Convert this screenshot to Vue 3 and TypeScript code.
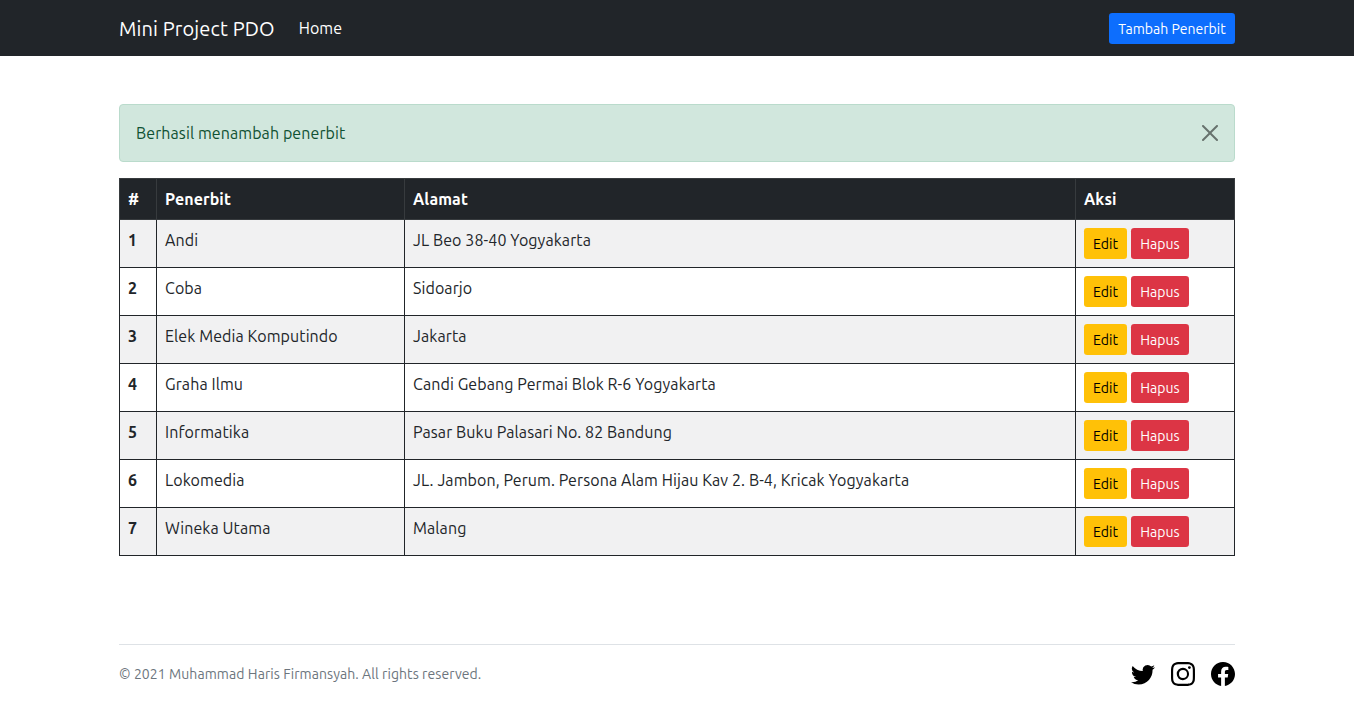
<script setup lang="ts">
import { ref } from 'vue'

interface Publisher {
  id: number
  name: string
  address: string
}

const showAlert = ref(true)

const publishers: Publisher[] = [
  { id: 1, name: 'Andi', address: 'JL Beo 38-40 Yogyakarta' },
  { id: 2, name: 'Coba', address: 'Sidoarjo' },
  { id: 3, name: 'Elek Media Komputindo', address: 'Jakarta' },
  { id: 4, name: 'Graha Ilmu', address: 'Candi Gebang Permai Blok R-6 Yogyakarta' },
  { id: 5, name: 'Informatika', address: 'Pasar Buku Palasari No. 82 Bandung' },
  { id: 6, name: 'Lokomedia', address: 'JL. Jambon, Perum. Persona Alam Hijau Kav 2. B-4, Kricak Yogyakarta' },
  { id: 7, name: 'Wineka Utama', address: 'Malang' },
]
</script>

<template>
  <div class="page">
    <nav class="navbar">
      <div class="container nav-inner">
        <a class="brand">Mini Project PDO</a>
        <a class="nav-link">Home</a>
        <a class="btn primary">Tambah Penerbit</a>
      </div>
    </nav>

    <main class="container main">
      <div v-if="showAlert" class="alert">
        <span>Berhasil menambah penerbit</span>
        <button class="close" aria-label="Close" @click="showAlert = false">
          <svg viewBox="0 0 16 16" width="16" height="16">
            <path d="M.293.293a1 1 0 011.414 0L8 6.586 14.293.293a1 1 0 111.414 1.414L9.414 8l6.293 6.293a1 1 0 01-1.414 1.414L8 9.414l-6.293 6.293a1 1 0 01-1.414-1.414L6.586 8 .293 1.707a1 1 0 010-1.414z" />
          </svg>
        </button>
      </div>

      <table class="table">
        <colgroup>
          <col class="c-id" />
          <col class="c-name" />
          <col class="c-address" />
          <col class="c-action" />
        </colgroup>
        <thead>
          <tr>
            <th>#</th>
            <th>Penerbit</th>
            <th>Alamat</th>
            <th>Aksi</th>
          </tr>
        </thead>
        <tbody>
          <tr v-for="p in publishers" :key="p.id">
            <th>{{ p.id }}</th>
            <td>{{ p.name }}</td>
            <td>{{ p.address }}</td>
            <td>
              <div class="actions">
                <a class="btn warning">Edit</a>
                <a class="btn danger">Hapus</a>
              </div>
            </td>
          </tr>
        </tbody>
      </table>
    </main>

    <footer class="container footer">
      <span class="copy">© 2021 Muhammad Haris Firmansyah. All rights reserved.</span>
      <div class="social">
        <svg viewBox="0 0 16 16" width="24" height="24">
          <path d="M5.026 15c6.038 0 9.341-5.003 9.341-9.334 0-.14 0-.282-.006-.422A6.685 6.685 0 0 0 16 3.542a6.658 6.658 0 0 1-1.889.518 3.301 3.301 0 0 0 1.447-1.817 6.533 6.533 0 0 1-2.087.793A3.286 3.286 0 0 0 7.875 6.03a9.325 9.325 0 0 1-6.767-3.429 3.289 3.289 0 0 0 1.018 4.382A3.323 3.323 0 0 1 .64 6.575v.045a3.288 3.288 0 0 0 2.632 3.218 3.203 3.203 0 0 1-.865.115 3.23 3.23 0 0 1-.614-.057 3.283 3.283 0 0 0 3.067 2.277A6.588 6.588 0 0 1 .78 13.58a6.32 6.32 0 0 1-.78-.045A9.344 9.344 0 0 0 5.026 15z" />
        </svg>
        <svg viewBox="0 0 16 16" width="24" height="24">
          <path d="M8 0C5.829 0 5.556.01 4.703.048 3.85.088 3.269.222 2.76.42a3.917 3.917 0 0 0-1.417.923A3.927 3.927 0 0 0 .42 2.76C.222 3.268.087 3.85.048 4.7.01 5.555 0 5.827 0 8.001c0 2.172.01 2.444.048 3.297.04.852.174 1.433.372 1.942.205.526.478.972.923 1.417.444.445.89.719 1.416.923.51.198 1.09.333 1.942.372C5.555 15.99 5.827 16 8 16s2.444-.01 3.298-.048c.851-.04 1.434-.174 1.943-.372a3.916 3.916 0 0 0 1.416-.923c.445-.445.718-.891.923-1.417.197-.509.332-1.09.372-1.942C15.99 10.445 16 10.173 16 8s-.01-2.445-.048-3.299c-.04-.851-.175-1.433-.372-1.941a3.926 3.926 0 0 0-.923-1.417A3.911 3.911 0 0 0 13.24.42c-.51-.198-1.092-.333-1.943-.372C10.443.01 10.172 0 7.998 0h.003zm-.717 1.442h.718c2.136 0 2.389.007 3.232.046.78.035 1.204.166 1.486.275.373.145.64.319.92.599.28.28.453.546.598.92.11.281.24.705.275 1.485.039.843.047 1.096.047 3.231s-.008 2.389-.047 3.232c-.035.78-.166 1.203-.275 1.485a2.47 2.47 0 0 1-.599.919c-.28.28-.546.453-.92.598-.28.11-.704.24-1.485.276-.843.038-1.096.047-3.232.047s-2.39-.009-3.233-.047c-.78-.036-1.203-.166-1.485-.276a2.478 2.478 0 0 1-.92-.598 2.48 2.48 0 0 1-.6-.92c-.109-.281-.24-.705-.275-1.485-.038-.843-.046-1.096-.046-3.233 0-2.136.008-2.388.046-3.231.036-.78.166-1.204.276-1.486.145-.373.319-.64.599-.92.28-.28.546-.453.92-.598.282-.11.705-.24 1.485-.276.738-.034 1.024-.044 2.515-.045v.002zm4.988 1.328a.96.96 0 1 0 0 1.92.96.96 0 0 0 0-1.92zm-4.27 1.122a4.109 4.109 0 1 0 0 8.217 4.109 4.109 0 0 0 0-8.217zm0 1.441a2.667 2.667 0 1 1 0 5.334 2.667 2.667 0 0 1 0-5.334z" />
        </svg>
        <svg viewBox="0 0 16 16" width="24" height="24">
          <path d="M16 8.049c0-4.446-3.582-8.05-8-8.05C3.58 0-.002 3.603-.002 8.05c0 4.017 2.926 7.347 6.75 7.951v-5.625h-2.03V8.05H6.75V6.275c0-2.017 1.195-3.131 3.022-3.131.876 0 1.791.157 1.791.157v1.98h-1.009c-.993 0-1.303.621-1.303 1.258v1.51h2.218l-.354 2.326H9.25V16c3.824-.604 6.75-3.934 6.75-7.951z" />
        </svg>
      </div>
    </footer>
  </div>
</template>

<style>
body {
  margin: 0;
  background: #fff;
}
</style>

<style scoped>
.page {
  font-family: Ubuntu, "Noto Sans", sans-serif;
  font-size: 16px;
  line-height: 24px;
  letter-spacing: 0.09px;
  color: #212529;
}
.page * {
  box-sizing: border-box;
}
.container {
  width: 1116px;
  margin: 0 auto;
}
.navbar {
  height: 56px;
  background: #212529;
}
.nav-inner {
  height: 56px;
  display: flex;
  align-items: center;
}
.brand {
  padding-top: 2px;
  font-size: 20px;
  line-height: 30px;
  letter-spacing: 0.13px;
  color: #fff;
  margin-right: 24px;
}
.nav-link {
  color: #fff;
  margin-right: auto;
}
.btn {
  display: block;
  height: 31px;
  padding: 6px 0 4px;
  border-radius: 3.2px;
  font-size: 14px;
  line-height: 21px;
  letter-spacing: 0.03px;
  text-align: center;
  white-space: nowrap;
  cursor: pointer;
}
.primary {
  width: 126px;
  color: #fff;
  background: #0d6efd;
}
.warning {
  width: 43px;
  color: #000;
  background: #ffc107;
}
.danger {
  width: 58px;
  color: #fff;
  background: #dc3545;
}
.main {
  padding-top: 48px;
}
.alert {
  height: 58px;
  margin-bottom: 16px;
  padding: 0 16px;
  display: flex;
  align-items: center;
  justify-content: space-between;
  border: 1px solid #badbcc;
  border-radius: 4px;
  background: #d1e7dd;
  color: #0f5132;
}
.close {
  display: flex;
  padding: 0;
  border: 0;
  background: none;
  opacity: 0.5;
  cursor: pointer;
}
.table {
  width: 1116px;
  table-layout: fixed;
  border-collapse: separate;
  border-spacing: 0;
}
.c-id {
  width: 38px;
}
.c-name {
  width: 248px;
}
.c-address {
  width: 671px;
}
.c-action {
  width: 159px;
}
th,
td {
  padding: 8px;
  text-align: left;
  vertical-align: top;
  border: solid #212529;
  border-width: 0 1px 1px 0;
  white-space: nowrap;
}
th:first-child {
  border-left-width: 1px;
}
thead th {
  color: #fff;
  background: #212529;
  border-color: #373b3e;
  border-top-width: 1px;
}
tbody tr:nth-child(odd) {
  background: #f1f1f2;
}
.actions {
  display: flex;
  gap: 4px;
}
.footer {
  margin-top: 88px;
  height: 59px;
  border-top: 1px solid #dee2e6;
  display: flex;
  align-items: center;
  justify-content: space-between;
}
.copy {
  font-size: 14px;
  letter-spacing: 0.075px;
  color: #6c757d;
}
.social {
  display: flex;
  gap: 16px;
}
.social svg {
  display: block;
}
</style>
